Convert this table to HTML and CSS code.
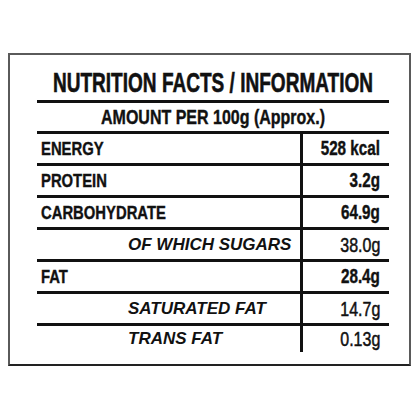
FILE: index.html
```html
<!DOCTYPE html>
<html lang="en">
<head>
  <meta charset="UTF-8" />
  <title>Nutrition facts</title>
  <link rel="stylesheet" href="styles.css">
</head>
<body>
  <div class="panel">
    <h1 class="title"><span class="narrow">NUTRITION FACTS / INFORMATION</span></h1>
    <div class="amount"><span class="narrow">AMOUNT PER 100g (Approx.)</span></div>
    <div class="facts">
      <div class="row">
        <div class="name"><span class="narrow">ENERGY</span></div>
        <div class="qty"><span class="narrow">528 kcal</span></div>
      </div>
      <div class="row">
        <div class="name"><span class="narrow">PROTEIN</span></div>
        <div class="qty"><span class="narrow">3.2g</span></div>
      </div>
      <div class="row">
        <div class="name"><span class="narrow">CARBOHYDRATE</span></div>
        <div class="qty"><span class="narrow">64.9g</span></div>
      </div>
      <div class="row sub">
        <div class="name">OF WHICH SUGARS</div>
        <div class="qty"><span class="narrow">38.0g</span></div>
      </div>
      <div class="row">
        <div class="name"><span class="narrow">FAT</span></div>
        <div class="qty"><span class="narrow">28.4g</span></div>
      </div>
      <div class="row sub">
        <div class="name">SATURATED FAT</div>
        <div class="qty"><span class="narrow">14.7g</span></div>
      </div>
      <div class="row sub">
        <div class="name">TRANS FAT</div>
        <div class="qty"><span class="narrow">0.13g</span></div>
      </div>
    </div>
  </div>
</body>
</html>
```

FILE: styles.css
```css
* {
  margin: 0;
  padding: 0;
  box-sizing: border-box;
}

body {
  background: #fff;
  color: #111;
  font-family: "Liberation Sans", Arial, sans-serif;
  padding: 53px 0 0 8px;
}

/* no condensed face installed, so squeeze the regular one */
.narrow {
  display: inline-block;
  white-space: nowrap;
  transform: scaleX(0.78);
  -webkit-text-stroke: 0.4px #111;
}

.panel {
  width: 403px;
  height: 313px;
  border: 2px solid #5a5a5a;
  border-bottom-color: #222;
  padding: 0 20px 0 27px;
}

.title {
  height: 48px;
  padding-top: 14px;
  border-bottom: 3px solid #111;
  font-size: 28px;
  line-height: 28px;
  font-weight: bold;
  text-align: center;
  white-space: nowrap;
}

.title .narrow {
  width: 474px;
  margin: 0 -100px;
  transform: scaleX(0.68);
  -webkit-text-stroke: 0.6px #111;
}

.amount {
  height: 31px;
  padding-top: 1px;
  border-bottom: 3px solid #111;
  font-size: 20px;
  line-height: 27px;
  font-weight: bold;
  text-align: center;
}

.amount .narrow {
  transform: scaleX(0.8);
}

.row {
  display: flex;
  height: 32px;
  border-bottom: 3px solid #111;
}

.row:last-child {
  height: 26px;
  border-bottom: 0;
}

.name {
  width: 266px;
  border-right: 3px solid #111;
  padding-left: 4px;
  font-size: 19px;
  line-height: 29px;
  font-weight: bold;
}

.name .narrow {
  transform-origin: left center;
}

.qty {
  flex: 1;
  padding-right: 9px;
  text-align: right;
  font-size: 19.5px;
  line-height: 29px;
  font-weight: bold;
}

.qty .narrow {
  transform-origin: right center;
}

.row.sub .name {
  padding-left: 91px;
  font-style: italic;
  font-size: 17px;
}

.row.sub .qty {
  font-weight: normal;
  font-size: 20.5px;
}

.row.sub .qty .narrow {
  -webkit-text-stroke: 0.5px #111;
}

.row:last-child .name,
.row:last-child .qty {
  line-height: 26px;
}
```
